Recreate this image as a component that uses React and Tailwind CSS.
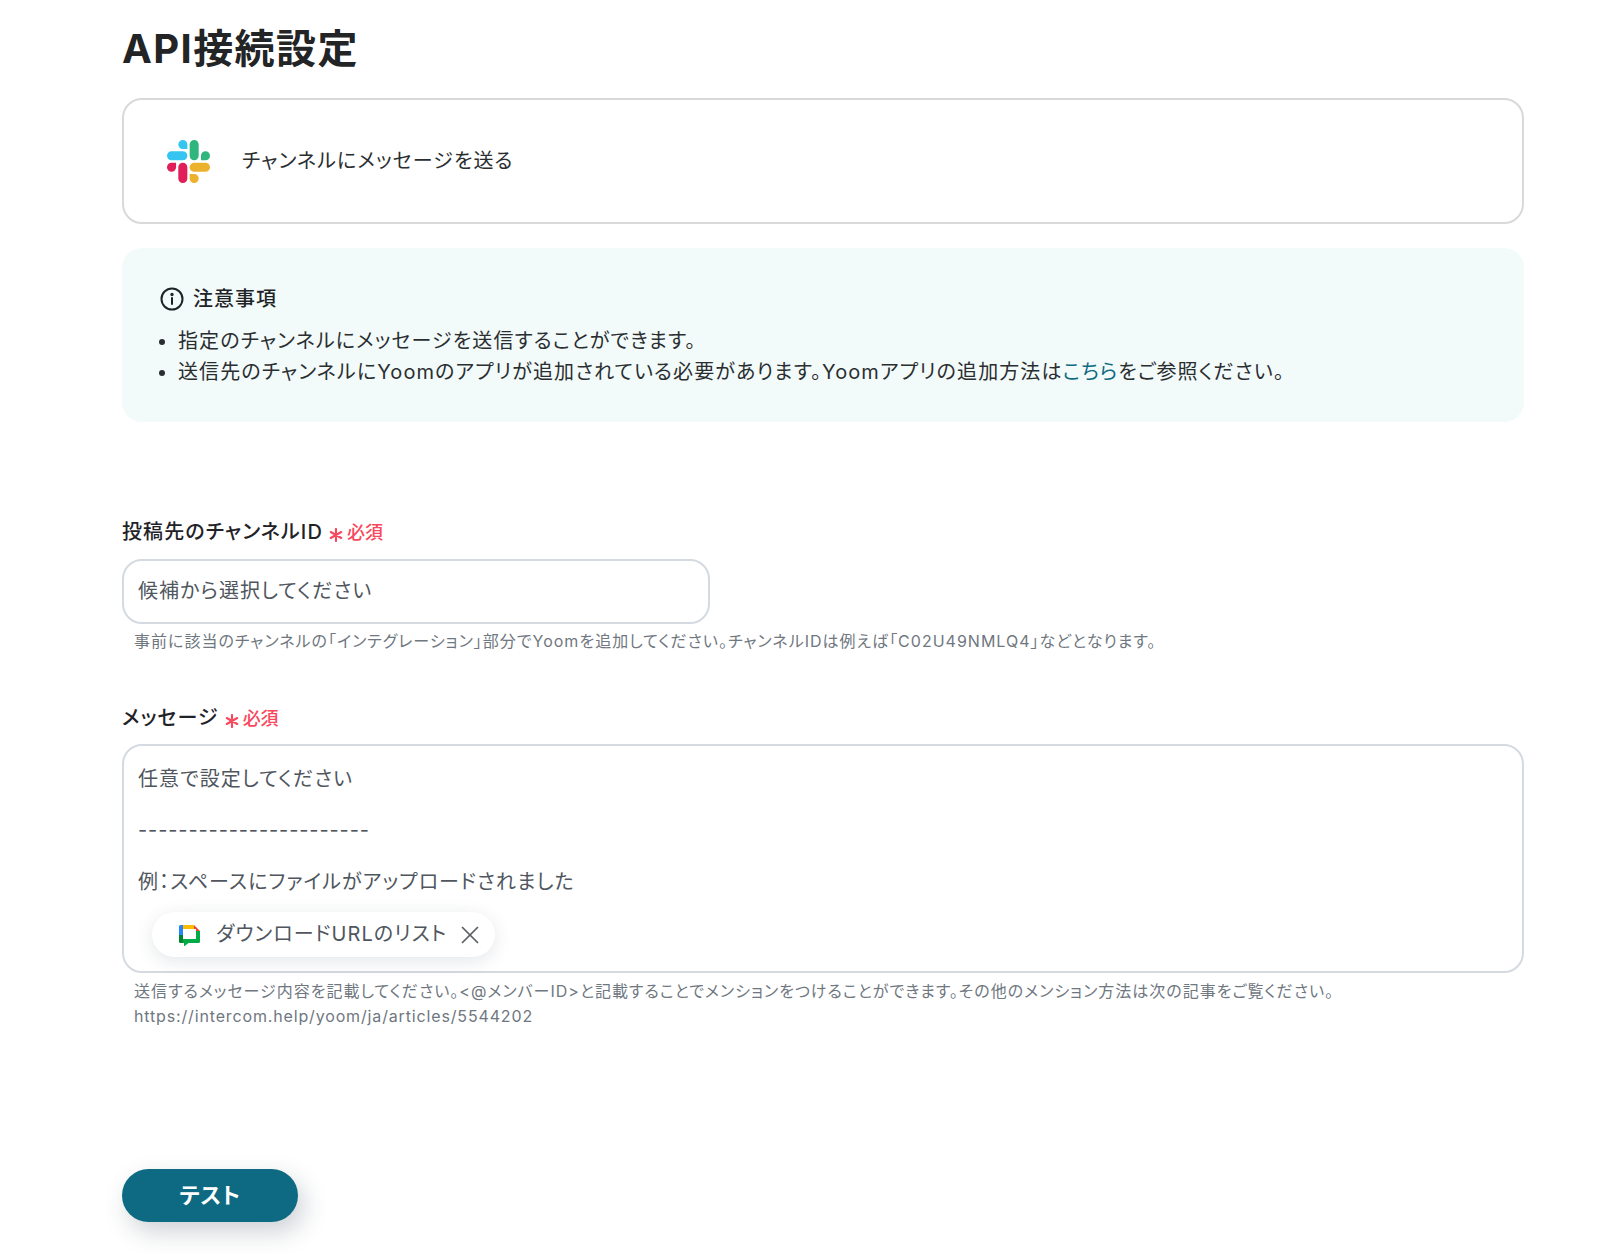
import React from 'react';
import { X } from 'lucide-react';

const SlackLogo = () => (
  <svg viewBox="0 0 122.8 122.8" className="w-[43px] h-[43px] shrink-0">
    <path d="M25.8 77.6c0 7.1-5.8 12.9-12.9 12.9S0 84.7 0 77.6s5.8-12.9 12.9-12.9h12.9v12.9z" fill="#E01E5A" />
    <path d="M32.3 77.6c0-7.1 5.8-12.9 12.9-12.9s12.9 5.8 12.9 12.9v32.3c0 7.1-5.8 12.9-12.9 12.9s-12.9-5.8-12.9-12.9V77.6z" fill="#E01E5A" />
    <path d="M45.2 25.8c-7.1 0-12.9-5.8-12.9-12.9S38.1 0 45.2 0s12.9 5.8 12.9 12.9v12.9H45.2z" fill="#36C5F0" />
    <path d="M45.2 32.3c7.1 0 12.9 5.8 12.9 12.9s-5.8 12.9-12.9 12.9H12.9C5.8 58.1 0 52.3 0 45.2s5.8-12.9 12.9-12.9h32.3z" fill="#36C5F0" />
    <path d="M97 45.2c0-7.1 5.8-12.9 12.9-12.9s12.9 5.8 12.9 12.9-5.8 12.9-12.9 12.9H97V45.2z" fill="#2EB67D" />
    <path d="M90.5 45.2c0 7.1-5.8 12.9-12.9 12.9s-12.9-5.8-12.9-12.9V12.9C64.7 5.8 70.5 0 77.6 0s12.9 5.8 12.9 12.9v32.3z" fill="#2EB67D" />
    <path d="M77.6 97c7.1 0 12.9 5.8 12.9 12.9s-5.8 12.9-12.9 12.9-12.9-5.8-12.9-12.9V97h12.9z" fill="#ECB22E" />
    <path d="M77.6 90.5c-7.1 0-12.9-5.8-12.9-12.9s5.8-12.9 12.9-12.9h32.3c7.1 0 12.9 5.8 12.9 12.9s-5.8 12.9-12.9 12.9H77.6z" fill="#ECB22E" />
  </svg>
);

const ChatLogo = () => (
  <svg viewBox="0 0 21 21.5" className="w-[21px] h-[21.5px] shrink-0 mt-[1px]">
    <path d="M4 0H15V4H4z" fill="#fbbc04" />
    <path d="M15 0L21 6H17V4H15z" fill="#ea4335" />
    <path d="M1.5 0H4V10H0V1.5A1.5 1.5 0 0 1 1.5 0z" fill="#2684fc" />
    <path d="M0 10H4V18H1.5A1.5 1.5 0 0 1 0 16.5z" fill="#00832d" />
    <path d="M17 6H21V16.5A1.5 1.5 0 0 1 19.5 18H9.5L5 21.5V18H4V14H17z" fill="#00ac47" />
  </svg>
);

const Required = () => (
  <span className="inline-flex items-center ml-[6px] text-[#f8485e] text-[18px] font-medium tracking-[0]">
    <svg viewBox="0 0 14 14" className="w-[14px] h-[14px] mr-[4px] mt-[5px]" stroke="#f8485e" strokeWidth="2.1" strokeLinecap="round">
      <path d="M7 1V13M1.8 4L12.2 10M12.2 4L1.8 10" />
    </svg>
    <span className="mt-[1px]">必須</span>
  </span>
);

const Label = ({ children }) => (
  <div className="flex items-center h-[28px] text-[20px] leading-[28px] font-medium text-[#1f2328] tracking-[1.1px] [font-feature-settings:'palt']">
    {children}
    <Required />
  </div>
);

const Hint = ({ children }) => (
  <p className="pl-[12px] text-[16px] leading-[25px] text-[#6f7780] tracking-[1px] [font-feature-settings:'palt']">{children}</p>
);

export default function App() {
  return (
    <div className="w-[1600px] h-[1254px] bg-white pl-[122px] pr-[76px] pt-[21px] overflow-hidden font-['Inter','Noto_Sans_CJK_JP',sans-serif]">
      <h1 className="text-[40px] leading-[56px] font-bold text-[#222426] tracking-[1.4px] [font-feature-settings:'palt']">API接続設定</h1>

      <div className="mt-[21px] h-[126px] flex items-center pl-[43px] gap-[32px] border-2 border-[#d9d9d9] rounded-[20px]">
        <SlackLogo />
        <span className="text-[20px] text-[#2b2e31] tracking-[1.08px] [font-feature-settings:'palt']">チャンネルにメッセージを送る</span>
      </div>

      <div className="mt-[24px] h-[174px] bg-[#f2fbfa] rounded-[20px] pl-[37px] pt-[36px]">
        <div className="flex items-center gap-[9px] pl-[1px] h-[30px]">
          <svg viewBox="0 0 24 24" className="w-[24px] h-[24px]" fill="none" stroke="#1f2328" strokeWidth="2" strokeLinecap="round">
            <circle cx="12" cy="12" r="10.5" />
            <path d="M12 11V17" />
            <circle cx="12" cy="7.5" r="0.7" fill="#1f2328" />
          </svg>
          <span className="text-[20px] font-medium text-[#1f2328] tracking-[1px]">注意事項</span>
        </div>
        <ul className="mt-[12px] text-[20px] leading-[31px] text-[#2b2e31] tracking-[1.1px] [font-feature-settings:'palt']">
          <li className="flex items-center gap-[13px]"><span className="w-[6px] h-[6px] rounded-full bg-[#2b2e31]" />指定のチャンネルにメッセージを送信することができます。</li>
          <li className="flex items-center gap-[13px]"><span className="w-[6px] h-[6px] rounded-full bg-[#2b2e31]" /><span>送信先のチャンネルにYoomのアプリが追加されている必要があります。Yoomアプリの追加方法は<span className="text-[#0e6a82]">こちら</span>をご参照ください。</span></li>
        </ul>
      </div>

      <div className="mt-[96px]">
        <Label>投稿先のチャンネルID</Label>
      </div>
      <div className="mt-[13px] w-[588px] h-[65px] flex items-center pl-[14px] pb-[2px] border-2 border-[#d5dae1] rounded-[20px] text-[20px] text-[#4f565e] tracking-[1.06px] [font-feature-settings:'palt']">
        候補から選択してください
      </div>
      <div className="mt-[5px]">
        <Hint>事前に該当のチャンネルの「インテグレーション」部分でYoomを追加してください。チャンネルIDは例えば「C02U49NMLQ4」などとなります。</Hint>
      </div>

      <div className="mt-[50px]">
        <Label>メッセージ</Label>
      </div>
      <div className="mt-[12px] h-[229px] border-2 border-[#d5dae1] rounded-[20px] pl-[14px] pt-[21px] text-[20px] leading-[25.7px] text-[#4f565e] tracking-[1.08px] [font-feature-settings:'palt']">
        <div>任意で設定してください</div>
        <div className="h-[25.7px]" />
        <div className="tracking-[0.88px]">-----------------------</div>
        <div className="h-[25.7px]" />
        <div>例：スペースにファイルがアップロードされました</div>
        <div className="mt-[17px] ml-[14px] w-[343px] h-[45px] flex items-center pl-[27px] rounded-full bg-white shadow-[0_4px_18px_rgba(30,50,70,0.12)]">
          <ChatLogo />
          <span className="ml-[16px]">ダウンロードURLのリスト</span>
          <X className="ml-[8px] w-[30px] h-[30px] text-[#5a6066]" strokeWidth={1.4} />
        </div>
      </div>
      <div className="mt-[6px]">
        <Hint>送信するメッセージ内容を記載してください。&lt;@メンバーID&gt;と記載することでメンションをつけることができます。その他のメンション方法は次の記事をご覧ください。<br /><span className="tracking-[0.85px]">https://intercom.help/yoom/ja/articles/5544202</span></Hint>
      </div>

      <button className="mt-[140px] w-[176px] h-[53px] rounded-full bg-[#0e6a82] text-white text-[22px] font-bold tracking-[0.5px] shadow-[6px_10px_24px_rgba(30,50,70,0.22)] [font-feature-settings:'palt']">
        テスト
      </button>
    </div>
  );
}
